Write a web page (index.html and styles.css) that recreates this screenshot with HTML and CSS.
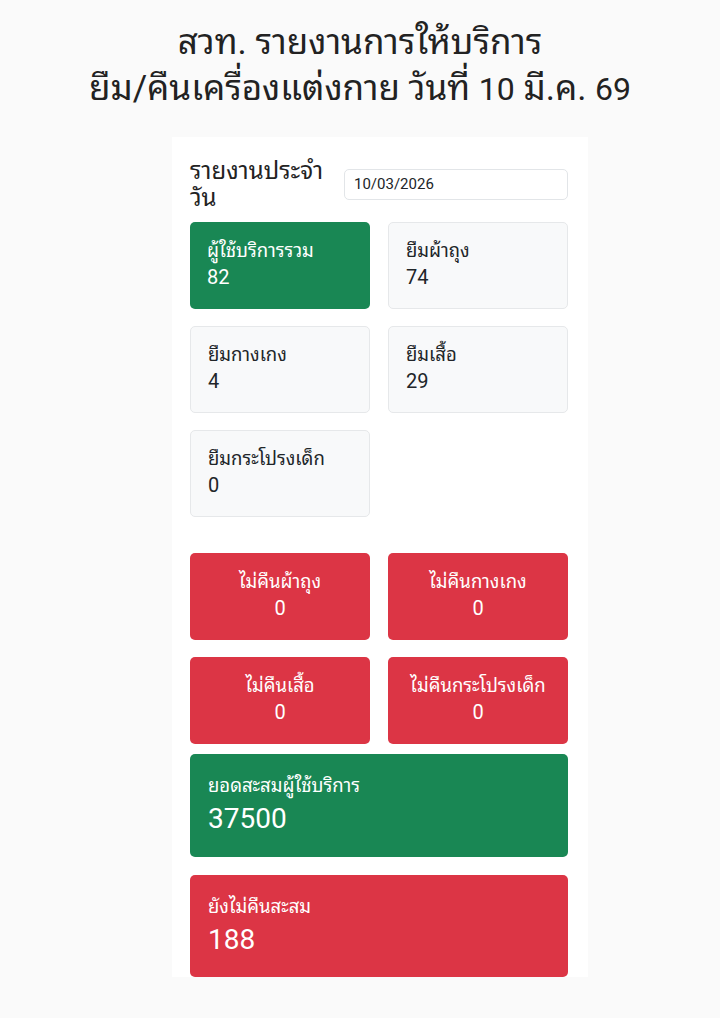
FILE: index.html
```html
<!DOCTYPE html>
<html lang="th">
<head>
<meta charset="utf-8">
<title>สวท. รายงานการให้บริการ</title>
<link rel="stylesheet" href="styles.css">
</head>
<body>
<h1 class="title">สวท. รายงานการให้บริการ<br>ยืม/คืนเครื่องแต่งกาย วันที่ <span class="num">10</span> มี.ค. <span class="num">69</span></h1>
<main class="card">
  <div class="head-row">
    <div class="head-label">รายงานประจำวัน</div>
    <div class="date-input">10/03/2026</div>
  </div>
  <div class="grid">
    <div class="box box-green"><div class="lbl">ผู้ใช้บริการรวม</div><div class="val">82</div></div>
    <div class="box box-light"><div class="lbl">ยืมผ้าถุง</div><div class="val">74</div></div>
    <div class="box box-light"><div class="lbl">ยืมกางเกง</div><div class="val">4</div></div>
    <div class="box box-light"><div class="lbl">ยืมเสื้อ</div><div class="val">29</div></div>
    <div class="box box-light"><div class="lbl">ยืมกระโปรงเด็ก</div><div class="val">0</div></div>
  </div>
  <div class="grid grid-red">
    <div class="box box-red center"><div class="lbl">ไม่คืนผ้าถุง</div><div class="val">0</div></div>
    <div class="box box-red center"><div class="lbl">ไม่คืนกางเกง</div><div class="val">0</div></div>
    <div class="box box-red center"><div class="lbl">ไม่คืนเสื้อ</div><div class="val">0</div></div>
    <div class="box box-red center"><div class="lbl">ไม่คืนกระโปรงเด็ก</div><div class="val">0</div></div>
  </div>
  <div class="big big-green"><div class="big-lbl">ยอดสะสมผู้ใช้บริการ</div><div class="big-val">37500</div></div>
  <div class="big big-red"><div class="big-lbl">ยังไม่คืนสะสม</div><div class="big-val">188</div></div>
</main>
</body>
</html>
```
FILE: styles.css
```css
html, body {
  margin: 0;
  padding: 0;
}
body {
  background: #fafafa;
  color: #212529;
  font-family: Roboto, "Noto Sans Thai Looped", "Loma", "Noto Sans Thai", "Noto Sans", sans-serif;
  height: 1018px;
  overflow: hidden;
}
.title {
  margin: 20px 0 0;
  font-size: 35px;
  font-weight: 400;
  line-height: 46px;
  text-align: center;
  color: #222;
}
.title .num {
  font-size: 32px;
}
.card {
  margin: 25px 0 0 172px;
  width: 416px;
  height: 840px;
  box-sizing: border-box;
  background: #fff;
  padding: 14px 20px 0 18px;
  overflow: hidden;
}
.head-row {
  display: flex;
  align-items: flex-start;
  gap: 14px;
}
.head-label {
  width: 140px;
  margin-top: 7px;
  font-size: 24px;
  line-height: 27px;
  color: #222;
}
.date-input {
  flex: 1;
  height: 31px;
  margin-top: 18px;
  box-sizing: border-box;
  border: 1px solid #e2e5e8;
  border-radius: 5px;
  padding: 0 9px;
  font-size: 15px;
  line-height: 29px;
  color: #212529;
}
.grid {
  display: grid;
  grid-template-columns: 180px 180px;
  column-gap: 18px;
  row-gap: 17px;
  margin-top: 10px;
}
.grid-red {
  margin-top: 36px;
}
.box {
  height: 87px;
  box-sizing: border-box;
  border-radius: 5px;
  padding: 16px 17px;
}
.box-green {
  background: #198754;
  color: #fff;
}
.box-light {
  background: #f8f9fa;
  border: 1px solid #e6e8ea;
  padding: 15px 17px;
}
.box-red {
  background: #dc3545;
  color: #fff;
}
.center {
  text-align: center;
}
.lbl {
  font-size: 18.5px;
  line-height: 26px;
}
.val {
  font-size: 20px;
  line-height: 27px;
}
.big {
  border-radius: 5px;
  color: #fff;
  padding: 18px 18px;
  box-sizing: border-box;
}
.big-green {
  background: #198754;
  height: 103px;
  margin-top: 10px;
}
.big-red {
  background: #dc3545;
  height: 102px;
  margin-top: 18px;
}
.big-lbl {
  font-size: 18.5px;
  line-height: 28px;
}
.big-val {
  font-size: 28px;
  line-height: 38px;
}
```
